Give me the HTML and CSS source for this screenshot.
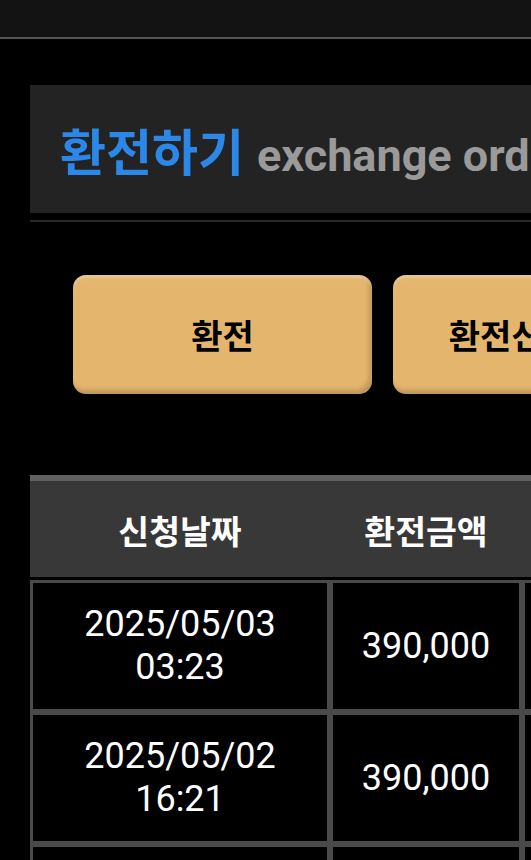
FILE: index.html
```html
<!DOCTYPE html>
<html lang="ko">
<head>
  <meta charset="UTF-8" />
  <meta name="viewport" content="width=device-width, initial-scale=1.0"/>
  <title>환전하기</title>
  <link rel="stylesheet" href="styles.css">
</head>
<body>
  <div class="topbar"></div>

  <div class="page">
    <div class="title-box">
      <h1><span class="title-ko">환전하기</span> <span class="title-en">exchange order</span></h1>
    </div>
    <div class="title-line"></div>

    <div class="tabs">
      <button class="tab-btn">환전</button>
      <button class="tab-btn">환전신청내역</button>
    </div>

    <table class="history">
      <thead>
        <tr>
          <th class="col-date">신청날짜</th>
          <th class="col-amount">환전금액</th>
          <th class="col-status">처리상태</th>
        </tr>
      </thead>
      <tbody>
        <tr>
          <td>2025/05/03<br>03:23</td>
          <td>390,000</td>
          <td>완료</td>
        </tr>
        <tr>
          <td>2025/05/02<br>16:21</td>
          <td>390,000</td>
          <td>완료</td>
        </tr>
        <tr>
          <td>2025/05/01<br>12:08</td>
          <td>390,000</td>
          <td>완료</td>
        </tr>
      </tbody>
    </table>
  </div>
</body>
</html>
```

FILE: styles.css
```css
body {
  margin: 0;
  background: #000;
  color: #fff;
  font-family: Roboto, "Noto Sans CJK KR", sans-serif;
  overflow: hidden;
}

.topbar {
  height: 37px;
  background: #131313;
  border-bottom: 2px solid #555;
}

.page {
  width: 900px;
  padding-left: 30px;
}

.title-box {
  margin-top: 46px;
  height: 128px;
  background: #232323;
  display: flex;
  align-items: center;
  padding-left: 30px;
}

.title-box h1 {
  margin: 0;
  white-space: nowrap;
  font-weight: 700;
  line-height: 1;
  padding-top: 9px;
}

.title-ko {
  color: #2b87e8;
  font-size: 50px;
  margin-right: 5px;
}

.title-en {
  color: #9a9a9a;
  font-size: 45px;
}

.title-line {
  margin-top: 7px;
  height: 2px;
  background: #2a2a2a;
}

.tabs {
  display: flex;
  gap: 21px;
  margin-top: 53px;
  padding-left: 43px;
}

.tab-btn {
  width: 299px;
  height: 119px;
  flex-shrink: 0;
  border: none;
  border-radius: 13px;
  background: #e4b66d;
  color: #000;
  font-family: Roboto, "Noto Sans CJK KR", sans-serif;
  font-size: 34px;
  font-weight: 700;
  box-shadow: inset 0 3px 3px rgba(255,255,255,0.25), inset -3px -4px 5px rgba(0,0,0,0.18);
  cursor: pointer;
}

.history {
  margin-top: 81px;
  border-collapse: separate;
  border-spacing: 0;
  width: 860px;
}

.history th {
  background: #383838;
  border-top: 6px solid #606060;
  border-bottom: 3px solid #000;
  height: 96px;
  padding: 0;
  font-size: 33.5px;
  font-weight: 700;
}

.col-date { width: 300px; }
.col-amount { width: 192px; }

.history td {
  border: 3px solid #4a4a4a;
  height: 132px;
  padding: 0;
  text-align: center;
  font-size: 36px;
  line-height: 43px;
  box-sizing: border-box;
}
```
